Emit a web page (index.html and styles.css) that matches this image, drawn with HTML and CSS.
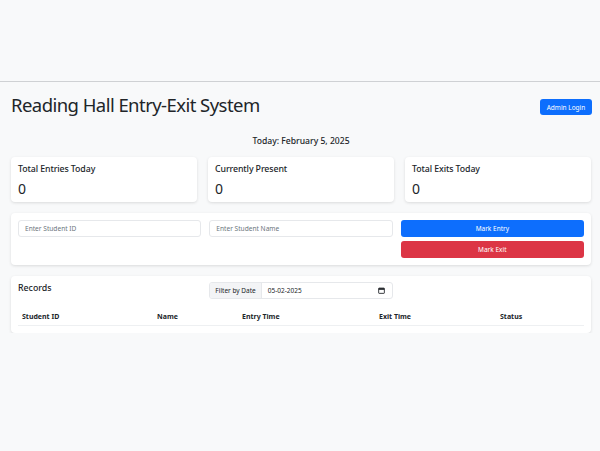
FILE: index.html
```html
<!DOCTYPE html>
<html lang="en">
<head>
<meta charset="utf-8">
<title>Reading Hall Entry-Exit System</title>
<link rel="stylesheet" href="styles.css">
</head>
<body>
<div class="topbar"></div>
<main class="container">
  <div class="header-row">
    <h1 class="title">Reading Hall Entry-Exit System</h1>
    <button class="btn btn-primary btn-sm">Admin Login</button>
  </div>
  <div class="today">Today: February 5, 2025</div>

  <div class="stats">
    <div class="card stat">
      <div class="stat-title">Total Entries Today</div>
      <div class="stat-value">0</div>
    </div>
    <div class="card stat">
      <div class="stat-title">Currently Present</div>
      <div class="stat-value">0</div>
    </div>
    <div class="card stat">
      <div class="stat-title">Total Exits Today</div>
      <div class="stat-value">0</div>
    </div>
  </div>

  <div class="card form-card">
    <input class="field" type="text" placeholder="Enter Student ID">
    <input class="field" type="text" placeholder="Enter Student Name">
    <div class="actions">
      <button class="btn btn-primary btn-block">Mark Entry</button>
      <button class="btn btn-danger btn-block">Mark Exit</button>
    </div>
  </div>

  <div class="card records">
    <div class="records-head">
      <div class="records-title">Records</div>
      <div class="input-group">
        <span class="ig-label">Filter by Date</span>
        <span class="ig-date">05-02-2025
          <svg class="cal" viewBox="0 0 16 16" width="7" height="7"><rect x="1.5" y="2.5" width="13" height="12" rx="1" fill="none" stroke="#212529" stroke-width="2"/><rect x="1.5" y="2.5" width="13" height="4" fill="#212529"/></svg>
        </span>
      </div>
      <div></div>
    </div>
    <table class="table">
      <thead>
        <tr>
          <th class="c1">Student ID</th>
          <th class="c2">Name</th>
          <th class="c3">Entry Time</th>
          <th class="c4">Exit Time</th>
          <th class="c5">Status</th>
        </tr>
      </thead>
      <tbody></tbody>
    </table>
  </div>
</main>
</body>
</html>
```

FILE: styles.css
```css
* { box-sizing: border-box; }
html, body { margin: 0; padding: 0; }
body {
  background: #f8f9fa;
  font-family: "Noto Sans", "Open Sans", sans-serif;
  color: #212529;
  font-size: 8px;
}
.topbar {
  height: 82px;
  border-bottom: 1px solid #cfd1d4;
}
.container {
  padding: 0 9px 0 11px;
}
.header-row {
  display: flex;
  justify-content: space-between;
  align-items: flex-start;
  padding-top: 10px;
  height: 53px;
}
.title {
  margin: 0;
  font-size: 18.5px;
  font-weight: 400;
  line-height: 26px;
  letter-spacing: -0.55px;
}
.btn {
  border: none;
  border-radius: 3px;
  color: #fff;
  font-family: inherit;
  font-size: 6.5px;
  cursor: pointer;
}
.btn-sm {
  margin-top: 7px;
  margin-right: -1px;
  height: 16px;
  width: 52px;
  padding: 0;
}
.btn-primary { background: #0d6efd; }
.btn-danger { background: #dc3545; }
.today {
  text-align: center;
  font-size: 8.6px;
  font-weight: 500;
  line-height: 12px;
  margin-bottom: 10px;
}
.card {
  background: #fff;
  border-radius: 4px;
  box-shadow: 0 1px 3px rgba(0,0,0,0.12);
}
.stats {
  display: grid;
  grid-template-columns: repeat(3, 1fr);
  gap: 11px;
  margin-bottom: 11px;
}
.stat {
  height: 45px;
  padding: 6px 7px;
}
.stat-title {
  font-size: 8.8px;
  font-weight: 500;
  line-height: 13px;
  letter-spacing: -0.1px;
}
.stat-value {
  font-size: 14px;
  line-height: 18px;
  margin-top: 4px;
}
.form-card {
  display: grid;
  grid-template-columns: repeat(3, 1fr);
  gap: 8px;
  padding: 7px;
  margin-bottom: 11px;
}
.field {
  height: 17px;
  border: 1px solid #e6e8eb;
  border-radius: 3px;
  padding: 0 6px;
  font-family: inherit;
  font-size: 6.6px;
  color: #212529;
  outline: none;
}
.field::placeholder { color: #6c757d; }
.actions {
  display: flex;
  flex-direction: column;
  gap: 4px;
}
.btn-block {
  height: 17px;
  width: 100%;
}
.records {
  padding: 6px 7px 7px;
}
.records-head {
  display: grid;
  grid-template-columns: repeat(3, 1fr);
  gap: 8px;
  align-items: start;
}
.records-title {
  font-size: 8.8px;
  font-weight: 500;
  line-height: 13px;
}
.input-group {
  display: flex;
  height: 17px;
  border: 1px solid #e6e8eb;
  border-radius: 3px;
  font-size: 6.5px;
  overflow: hidden;
}
.ig-label {
  display: flex;
  align-items: center;
  padding: 0 5px;
  background: #f3f4f6;
  border-right: 1px solid #e6e8eb;
  color: #212529;
}
.ig-date {
  flex: 1;
  display: flex;
  align-items: center;
  justify-content: space-between;
  padding: 0 7px 0 6px;
  color: #212529;
}
.cal { display: block; }
.table {
  width: 100%;
  border-collapse: collapse;
  margin-top: 11px;
}
.table th {
  text-align: left;
  font-size: 7px;
  font-weight: 700;
  padding: 3px 4px 4px;
  border-bottom: 1px solid #eef0f2;
  line-height: 8px;
}
.c1 { width: 135px; }
.c2 { width: 85px; }
.c3 { width: 137px; }
.c4 { width: 121px; }
```
